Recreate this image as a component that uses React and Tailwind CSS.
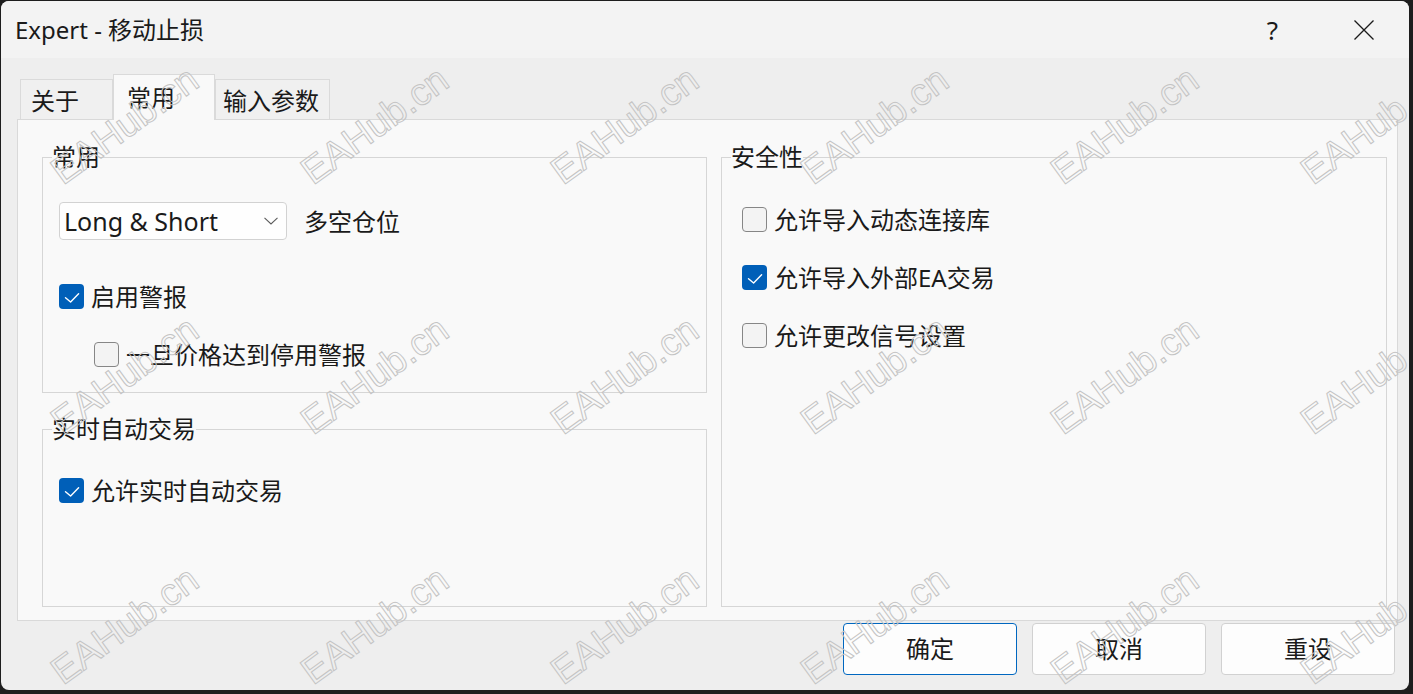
import React from "react";

const ui = "font-['Noto_Sans','Noto_Sans_CJK_SC',sans-serif]";

function CheckBox({ checked }) {
  if (checked) {
    return (
      <span className="flex h-[25px] w-[25px] shrink-0 items-center justify-center rounded-[4px] bg-[#005fb8]">
        <svg width="25" height="25" viewBox="0 0 25 25" fill="none">
          <path d="M6.5 13.8 11.6 18 19.6 9.8" stroke="white" strokeWidth="1.4" strokeLinecap="round" strokeLinejoin="round" />
        </svg>
      </span>
    );
  }
  return <span className="block h-[25px] w-[25px] shrink-0 rounded-[4px] border border-[#868686] bg-[#f3f3f3]" />;
}

function Option({ checked, label, className = "" }) {
  return (
    <div className={`flex h-[25px] items-center gap-[7px] ${className}`}>
      <CheckBox checked={checked} />
      <span className="text-[24px] leading-[25px]">{label}</span>
    </div>
  );
}

function Group({ title, className = "", children }) {
  return (
    <fieldset className={`border border-[#d6d6d6] ${className}`}>
      <legend className="ml-[9px] text-[24px] leading-[24px]">{title}</legend>
      {children}
    </fieldset>
  );
}

function Tab({ label, active, className = "" }) {
  return (
    <div
      className={`flex items-center border border-b-0 border-[#dadada] text-[24px] leading-[24px] ${
        active ? "relative z-10 -mb-px h-[46px] bg-[#f9f9f9]" : "h-[40px] bg-[#f0f0f0] pt-[2px]"
      } ${className}`}
    >
      {label}
    </div>
  );
}

export default function App() {
  return (
    <div className="h-[694px] w-[1413px] overflow-hidden bg-[#1d1d1d] pl-px pt-px">
      <div className={`relative flex h-[689px] w-[1408px] flex-col overflow-hidden rounded-[8px] bg-[#eeeeee] text-[#1a1a1a] ${ui}`}>

        {/* title bar */}
        <div className="flex h-[57px] shrink-0 items-center bg-[#f3f3f3]">
          <span className="flex-1 pl-[14px] text-[24px] leading-[24px]">Expert - 移动止损</span>
          <span className="flex h-full w-[91px] items-center justify-center text-[26px] leading-none">?</span>
          <span className="flex h-full w-[91px] items-center justify-center">
            <svg width="20" height="20" viewBox="0 0 20 20" fill="none">
              <path d="M0.5 0.5 19.5 19.5 M19.5 0.5 0.5 19.5" stroke="#1a1a1a" strokeWidth="1.3" />
            </svg>
          </span>
        </div>

        {/* tabs */}
        <div className="flex h-[61px] shrink-0 items-end pl-[19px]">
          <Tab label="关于" className="w-[93px] pl-[10px]" />
          <Tab label="常用" active className="w-[102px] pl-[13px]" />
          <Tab label="输入参数" className="w-[115px] pl-[7px]" />
        </div>

        {/* tab page */}
        <div className="ml-[16px] flex h-[502px] w-[1381px] shrink-0 gap-[14px] border border-[#d9d9d9] bg-[#f9f9f9] pl-[24px] pt-[25px]">
          <div className="flex w-[665px] flex-col">
            <Group title="常用" className="h-[248px]">
              <div className="ml-[16px] mt-[33px] flex items-center">
                <div className="flex h-[38px] w-[228px] items-center justify-between rounded-[4px] border border-[#d2d2d2] bg-[#fefefe] pl-[4px] pr-[8px]">
                  <span className="font-['Noto_Sans',sans-serif] text-[25px] leading-[25px]">Long &amp; Short</span>
                  <svg width="14" height="8" viewBox="0 0 14 8" fill="none">
                    <path d="M0.5 0.8 7 7 13.5 0.8" stroke="#5c5c5c" strokeWidth="1.1" />
                  </svg>
                </div>
                <span className="ml-[17px] text-[24px] leading-[25px]">多空仓位</span>
              </div>
              <Option checked label="启用警报" className="ml-[16px] mt-[44px]" />
              <Option label="一旦价格达到停用警报" className="ml-[51px] mt-[33px]" />
            </Group>

            <Group title="实时自动交易" className="mt-[24px] h-[190px]">
              <Option checked label="允许实时自动交易" className="ml-[16px] mt-[37px]" />
            </Group>
          </div>

          <Group title="安全性" className="h-[462px] w-[666px]">
            <Option label="允许导入动态连接库" className="ml-[20px] mt-[38px]" />
            <Option checked label="允许导入外部EA交易" className="ml-[20px] mt-[33px]" />
            <Option label="允许更改信号设置" className="ml-[20px] mt-[33px]" />
          </Group>
        </div>

        {/* buttons */}
        <div className="mt-[2px] flex justify-end gap-[15px] pr-[14px]">
          <button className="h-[52px] w-[174px] rounded-[4px] border border-[#0067c0] bg-[#fdfdfd] text-[24px]">确定</button>
          <button className="h-[52px] w-[174px] rounded-[4px] border border-[#d1d1d1] bg-[#fdfdfd] text-[24px]">取消</button>
          <button className="h-[52px] w-[174px] rounded-[4px] border border-[#d1d1d1] bg-[#fdfdfd] text-[24px]">重设</button>
        </div>

        {/* watermark */}
        <div className="pointer-events-none absolute -left-px -top-px z-20 grid grid-cols-[repeat(6,250px)] grid-rows-[repeat(3,250px)]">
          {Array.from({ length: 18 }).map((_, i) => (
            <div key={i} className="flex items-center justify-center">
              <span className="-rotate-[36deg] font-['Liberation_Sans',Arial,sans-serif] text-[38px] leading-none text-transparent [-webkit-text-stroke:1px_#c4c4c4]">
                EAHub.cn
              </span>
            </div>
          ))}
        </div>
      </div>
    </div>
  );
}
